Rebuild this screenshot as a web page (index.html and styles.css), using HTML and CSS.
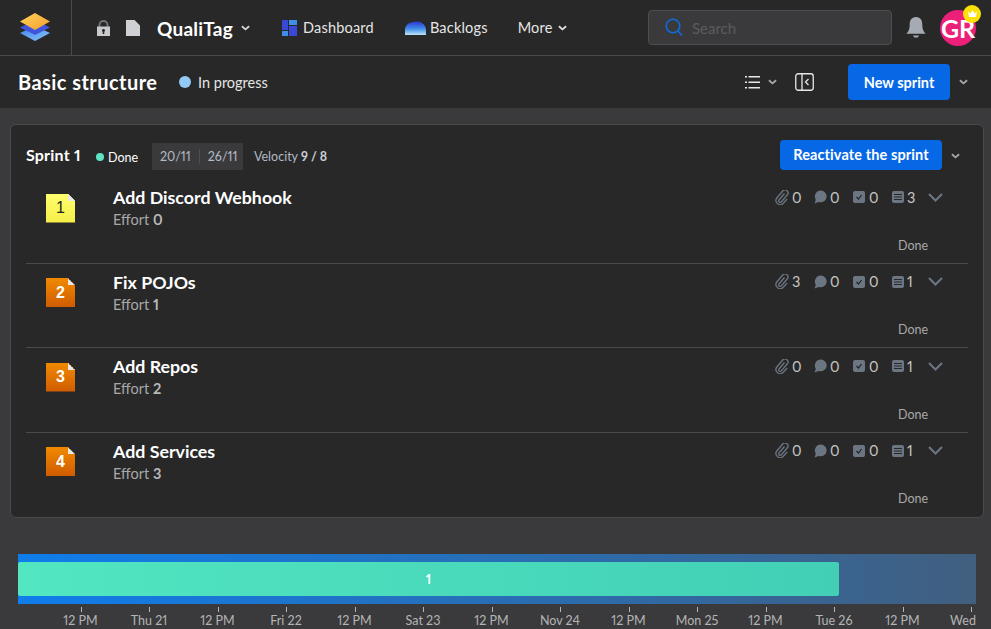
FILE: index.html
```html
<!DOCTYPE html>
<html lang="en">
<head>
<meta charset="utf-8">
<title>QualiTag</title>
<link rel="stylesheet" href="styles.css">
</head>
<body>
<header class="topbar">
  <div class="logo-cell">
    <svg width="32" height="30" viewBox="0 0 32 30"><defs><linearGradient id="lg1" x1="0" y1="0" x2="1" y2="1"><stop offset="0" stop-color="#ffd65a"/><stop offset="1" stop-color="#f79a2e"/></linearGradient><linearGradient id="lg2" x1="0" y1="0" x2="1" y2="1"><stop offset="0" stop-color="#3d82ec"/><stop offset="1" stop-color="#86c5f7"/></linearGradient></defs><path d="M16 14 31 21 16 29 1 21Z" fill="url(#lg2)"/><path d="M16 8 31 15.500 16 23 1 15.500Z" fill="#3f55dc"/><path d="M16 1 31 9.500 16 18 1 9.500Z" fill="url(#lg1)"/></svg>
  </div>
  <div class="crumbs">
    <svg class="lock" width="15" height="16" viewBox="0 0 15 16"><path d="M3.500 7V5a4 4 0 0 1 8 0v2" fill="none" stroke="#6f7378" stroke-width="2"/><path fill-rule="evenodd" d="M1 6.500h13V16H1ZM7.500 9a1.500 1.500 0 0 0-.8 2.800V14h1.600v-2.200A1.500 1.500 0 0 0 7.500 9Z" fill="#c9cacc"/></svg>
    <svg class="doc" width="15" height="16" viewBox="0 0 15 16"><path d="M1 0h8.500L15 5.500V16H1Z" fill="#cfd0d3"/></svg>
    <span class="project">QualiTag</span>
    <svg class="chev" width="9" height="6" viewBox="0 0 10 6"><path d="M1 1l4 3.500L9 1" fill="none" stroke="#d5d5d5" stroke-width="1.600"/></svg>
    <a class="nav nav-dash">
      <svg width="15" height="16" viewBox="0 0 15 16"><rect width="6" height="10" fill="#3a48d8"/><rect y="11" width="6" height="5" fill="#3f8fe8"/><rect x="7" width="8" height="5" fill="#3f8fe8"/><rect x="7" y="6" width="8" height="10" fill="#3a48d8"/></svg>
      Dashboard
    </a>
    <a class="nav nav-back">
      <svg width="21" height="14" viewBox="0 0 21 14"><defs><linearGradient id="bk" x1="0" y1="0" x2="0" y2="1"><stop offset="0" stop-color="#2d35d0"/><stop offset=".55" stop-color="#3f8fe8"/><stop offset="1" stop-color="#bfe3f8"/></linearGradient></defs><path d="M0 14V9C0 5 3 2 6 1.500 10 0 15 0 17 2c2.500 1.500 4 4 4 7v5Z" fill="url(#bk)"/></svg>
      Backlogs
    </a>
    <a class="nav nav-more">More
      <svg class="chev" width="9" height="6" viewBox="0 0 10 6"><path d="M1 1l4 3.500L9 1" fill="none" stroke="#e0e0e0" stroke-width="1.700"/></svg>
    </a>
  </div>
  <div class="top-right">
    <div class="search">
      <svg width="18" height="19" viewBox="0 0 18 19"><circle cx="8" cy="8" r="6.800" fill="none" stroke="#0f6be0" stroke-width="1.600"/><path d="M13 13l4 4.500" stroke="#0f6be0" stroke-width="1.600"/></svg>
      <span>Search</span>
    </div>
    <svg class="bell" width="20" height="21" viewBox="0 0 19 20"><path d="M9.500 0C14 0 15.500 3.500 15.500 7.500c0 4 1 6 3.200 8.500H.3C2.500 13.500 3.500 11.500 3.500 7.500 3.500 3.500 5 0 9.500 0Z" fill="#a6abb3"/><path d="M6.500 17.500h6l-1.500 2H8Z" fill="#a6abb3"/></svg>
    <div class="avatar">GR
      <span class="crown"><svg width="11" height="9" viewBox="0 0 11 9"><path d="M1 2.500 3.500 4.500 5.500 1 7.500 4.500 10 2.500 9 8H2Z" fill="#fff"/></svg></span>
    </div>
  </div>
</header>

<section class="subbar">
  <h1>Basic structure</h1>
  <span class="dot dot-progress"></span>
  <span class="status">In progress</span>
  <div class="sub-right">
    <svg width="15" height="13" viewBox="0 0 15 13"><g fill="#e8e8e8"><rect width="2" height="1.500"/><rect x="3.500" width="11.500" height="1.500"/><rect y="5.500" width="2" height="1.500"/><rect x="3.500" y="5.500" width="11.500" height="1.500"/><rect y="11" width="2" height="1.500"/><rect x="3.500" y="11" width="11.500" height="1.500"/></g></svg>
    <svg class="chev sub-chev" width="9" height="6" viewBox="0 0 10 6"><path d="M1 1l4 3.500L9 1" fill="none" stroke="#a8a8a8" stroke-width="1.700"/></svg>
    <svg class="panel" width="19" height="18" viewBox="0 0 19 18"><rect x=".75" y=".75" width="17.500" height="16.500" rx="2.500" fill="none" stroke="#e8e8e8" stroke-width="1.300"/><path d="M7 1v16" stroke="#e8e8e8" stroke-width="1.300"/><path d="M13.500 6l-3 3 3 3" fill="none" stroke="#e8e8e8" stroke-width="1.300"/></svg>
    <button class="btn btn-new">New sprint</button>
    <svg class="chev sub-chev2" width="9" height="6" viewBox="0 0 10 6"><path d="M1 1l4 3.500L9 1" fill="none" stroke="#a8a8a8" stroke-width="1.700"/></svg>
  </div>
</section>

<main class="content">
  <section class="card">
    <div class="sprint-head">
      <span class="sprint-name">Sprint 1</span>
      <span class="dot dot-done"></span>
      <span class="done-label">Done</span>
      <span class="dates"><span>20/11</span><i></i><span>26/11</span></span>
      <span class="velocity">Velocity <b>9 / 8</b></span>
      <button class="btn btn-react">Reactivate the sprint</button>
      <svg class="chev react-chev" width="9" height="6" viewBox="0 0 10 6"><path d="M1 1l4 3.500L9 1" fill="none" stroke="#a8a8a8" stroke-width="1.700"/></svg>
    </div>

    <article class="row">
      <div class="note note-yellow">1</div>
      <div class="info"><h2>Add Discord Webhook</h2><p>Effort <b>0</b></p></div>
      <div class="meta">
        <div class="counts">
          <svg width="14" height="15" viewBox="0 0 14 15"><path d="M9.500 3.500 4 10a1.500 1.500 0 0 0 2.200 2l6-7a3 3 0 0 0-4.500-4L1.800 8a4.200 4.200 0 0 0 6.300 5.500l4-4.500" fill="none" stroke="#6c7683" stroke-width="1.300"/></svg><span>0</span>
          <svg class="c2" width="13" height="14" viewBox=".5 .8 12.200 12.400"><path d="M6.800 1a5.500 5.500 0 1 1-2 10.600L1 13l1.200-3.500A5.500 5.500 0 0 1 6.800 1Z" fill="#6c7683"/></svg><span>0</span>
          <svg class="c3" width="12" height="12" viewBox="0 0 12 12"><rect width="12" height="12" rx="2" fill="#6c7683"/><path d="M3.500 6l2 2 3-4" fill="none" stroke="#1f2226" stroke-width="1.200"/></svg><span>0</span>
          <svg class="c4" width="12" height="12" viewBox="0 0 12 12"><rect width="12" height="12" rx="2" fill="#6c7683"/><path d="M2 3.500h8M2 6h8M2 8.500h8" stroke="#282828" stroke-width="1"/></svg><span>3</span>
          <svg class="expand" width="15" height="9" viewBox="0 0 15 9"><path d="M1 1l6.500 6.500L14 1" fill="none" stroke="#6c7683" stroke-width="2"/></svg>
        </div>
        <div class="row-status">Done</div>
      </div>
    </article>

    <article class="row">
      <div class="note note-orange">2</div>
      <div class="info"><h2>Fix POJOs</h2><p>Effort <b>1</b></p></div>
      <div class="meta">
        <div class="counts">
          <svg width="14" height="15" viewBox="0 0 14 15"><path d="M9.500 3.500 4 10a1.500 1.500 0 0 0 2.200 2l6-7a3 3 0 0 0-4.500-4L1.800 8a4.200 4.200 0 0 0 6.300 5.500l4-4.500" fill="none" stroke="#6c7683" stroke-width="1.300"/></svg><span>3</span>
          <svg class="c2" width="13" height="14" viewBox=".5 .8 12.200 12.400"><path d="M6.800 1a5.500 5.500 0 1 1-2 10.600L1 13l1.200-3.500A5.500 5.500 0 0 1 6.800 1Z" fill="#6c7683"/></svg><span>0</span>
          <svg class="c3" width="12" height="12" viewBox="0 0 12 12"><rect width="12" height="12" rx="2" fill="#6c7683"/><path d="M3.500 6l2 2 3-4" fill="none" stroke="#1f2226" stroke-width="1.200"/></svg><span>0</span>
          <svg class="c4" width="12" height="12" viewBox="0 0 12 12"><rect width="12" height="12" rx="2" fill="#6c7683"/><path d="M2 3.500h8M2 6h8M2 8.500h8" stroke="#282828" stroke-width="1"/></svg><span>1</span>
          <svg class="expand" width="15" height="9" viewBox="0 0 15 9"><path d="M1 1l6.500 6.500L14 1" fill="none" stroke="#6c7683" stroke-width="2"/></svg>
        </div>
        <div class="row-status">Done</div>
      </div>
    </article>

    <article class="row">
      <div class="note note-orange">3</div>
      <div class="info"><h2>Add Repos</h2><p>Effort <b>2</b></p></div>
      <div class="meta">
        <div class="counts">
          <svg width="14" height="15" viewBox="0 0 14 15"><path d="M9.500 3.500 4 10a1.500 1.500 0 0 0 2.200 2l6-7a3 3 0 0 0-4.500-4L1.800 8a4.200 4.200 0 0 0 6.300 5.500l4-4.500" fill="none" stroke="#6c7683" stroke-width="1.300"/></svg><span>0</span>
          <svg class="c2" width="13" height="14" viewBox=".5 .8 12.200 12.400"><path d="M6.800 1a5.500 5.500 0 1 1-2 10.600L1 13l1.200-3.500A5.500 5.500 0 0 1 6.800 1Z" fill="#6c7683"/></svg><span>0</span>
          <svg class="c3" width="12" height="12" viewBox="0 0 12 12"><rect width="12" height="12" rx="2" fill="#6c7683"/><path d="M3.500 6l2 2 3-4" fill="none" stroke="#1f2226" stroke-width="1.200"/></svg><span>0</span>
          <svg class="c4" width="12" height="12" viewBox="0 0 12 12"><rect width="12" height="12" rx="2" fill="#6c7683"/><path d="M2 3.500h8M2 6h8M2 8.500h8" stroke="#282828" stroke-width="1"/></svg><span>1</span>
          <svg class="expand" width="15" height="9" viewBox="0 0 15 9"><path d="M1 1l6.500 6.500L14 1" fill="none" stroke="#6c7683" stroke-width="2"/></svg>
        </div>
        <div class="row-status">Done</div>
      </div>
    </article>

    <article class="row">
      <div class="note note-orange">4</div>
      <div class="info"><h2>Add Services</h2><p>Effort <b>3</b></p></div>
      <div class="meta">
        <div class="counts">
          <svg width="14" height="15" viewBox="0 0 14 15"><path d="M9.500 3.500 4 10a1.500 1.500 0 0 0 2.200 2l6-7a3 3 0 0 0-4.500-4L1.800 8a4.200 4.200 0 0 0 6.300 5.500l4-4.500" fill="none" stroke="#6c7683" stroke-width="1.300"/></svg><span>0</span>
          <svg class="c2" width="13" height="14" viewBox=".5 .8 12.200 12.400"><path d="M6.800 1a5.500 5.500 0 1 1-2 10.600L1 13l1.200-3.500A5.500 5.500 0 0 1 6.800 1Z" fill="#6c7683"/></svg><span>0</span>
          <svg class="c3" width="12" height="12" viewBox="0 0 12 12"><rect width="12" height="12" rx="2" fill="#6c7683"/><path d="M3.500 6l2 2 3-4" fill="none" stroke="#1f2226" stroke-width="1.200"/></svg><span>0</span>
          <svg class="c4" width="12" height="12" viewBox="0 0 12 12"><rect width="12" height="12" rx="2" fill="#6c7683"/><path d="M2 3.500h8M2 6h8M2 8.500h8" stroke="#282828" stroke-width="1"/></svg><span>1</span>
          <svg class="expand" width="15" height="9" viewBox="0 0 15 9"><path d="M1 1l6.500 6.500L14 1" fill="none" stroke="#6c7683" stroke-width="2"/></svg>
        </div>
        <div class="row-status">Done</div>
      </div>
    </article>
  </section>

  <section class="chart">
    <div class="track"><div class="bar">1</div></div>
    <div class="axis">
      <div class="tick">12 PM</div><div class="tick">Thu 21</div><div class="tick">12 PM</div><div class="tick">Fri 22</div><div class="tick">12 PM</div><div class="tick">Sat 23</div><div class="tick">12 PM</div><div class="tick">Nov 24</div><div class="tick">12 PM</div><div class="tick">Mon 25</div><div class="tick">12 PM</div><div class="tick">Tue 26</div><div class="tick">12 PM</div><div class="tick">Wed</div>
    </div>
  </section>
</main>
</body>
</html>
```

FILE: styles.css
```css
* { box-sizing: border-box; }
html, body { margin: 0; padding: 0; }
body {
  width: 991px;
  height: 629px;
  overflow: hidden;
  background: #3a3a3c;
  color: #fff;
  font-family: "Lato", "Liberation Sans", sans-serif;
  font-variant-numeric: proportional-nums;
}
svg { display: block; flex: none; }
h1, h2, p { margin: 0; }
.chev path { stroke-width: 2; }

.topbar {
  height: 56px;
  display: flex;
  align-items: center;
  background: #282828;
  border-bottom: 1px solid #4a4a4a;
}
.logo-cell {
  width: 72px;
  height: 55px;
  padding: 12px 0 0 19px;
  border-right: 1px solid #4a4a4a;
}
.crumbs { display: flex; align-items: center; padding-left: 24px; }
.doc { margin-left: 14px; }
.project {
  margin: 2px 0 0 17px;
  width: 77px;
  font-size: 19px;
  line-height: 24px;
  font-weight: 700;
  letter-spacing: .25px;
  white-space: nowrap;
}
.crumbs > .chev { margin-left: 7px; }
.nav { display: flex; align-items: center; font-size: 14.500px; letter-spacing: .2px; color: #e6e6e6; white-space: nowrap; }
.nav-dash { margin-left: 32px; gap: 6px; }
.nav-back { margin-left: 31px; gap: 4px; }
.nav-more { margin-left: 30px; gap: 5px; }

.top-right { margin-left: auto; display: flex; align-items: center; padding-right: 15px; }
.search {
  width: 244px;
  height: 35px;
  display: flex;
  align-items: center;
  gap: 9px;
  padding-left: 16px;
  background: #3a3a3c;
  border: 1px solid #4e4e50;
  border-radius: 4px;
  font-size: 15px;
  color: #5c5c5e;
}
.bell { margin-left: 14px; }
.avatar {
  position: relative;
  margin-left: 14px;
  width: 36px;
  height: 36px;
  border-radius: 50%;
  background: #ec1f79;
  display: flex;
  align-items: center;
  justify-content: center;
  font-size: 25px;
  font-weight: 700;
}
.crown {
  position: absolute;
  top: -5px;
  right: -5px;
  width: 18px;
  height: 18px;
  border-radius: 50%;
  background: #fbe108;
  display: flex;
  align-items: center;
  justify-content: center;
}

.subbar {
  height: 52px;
  display: flex;
  align-items: center;
  padding: 0 23px 0 18px;
  background: #282828;
}
h1 { font-size: 20px; font-weight: 700; letter-spacing: .45px; width: 139px; white-space: nowrap; }
.dot { display: block; border-radius: 50%; flex: none; }
.dot-progress { width: 12px; height: 12px; margin-left: 22px; background: #93c9f5; }
.status { margin-left: 7px; font-size: 14.500px; color: #e6e6e6; }
.sub-right { margin-left: auto; display: flex; align-items: center; }
.sub-chev { margin-left: 8px; }
.panel { margin-left: 18px; }
.btn {
  border: 0;
  color: #fff;
  background: #0768e6;
  border-radius: 4px;
  font-family: inherit;
  font-weight: 700;
  padding: 0;
}
.btn-new { margin-left: 34px; width: 102px; height: 36px; font-size: 14.500px; }
.sub-chev2 { margin-left: 9px; }

.content { padding: 16px 7px 0 10px; }
.card {
  height: 394px;
  padding: 0 15px;
  background: #282828;
  border: 1px solid #4a4a4a;
  border-radius: 6px;
}
.sprint-head { height: 54px; padding-top: 9px; display: flex; align-items: center; }
.sprint-name { margin-bottom: 4px; font-size: 16px; font-weight: 700; letter-spacing: .2px; width: 70px; white-space: nowrap; }
.dot-done { width: 8px; height: 8px; background: #5fe3c3; }
.done-label { margin: 2px 0 0 4px; font-size: 12.500px; width: 44px; }
.dates {
  display: flex;
  align-items: center;
  width: 91px;
  height: 27px;
  padding-left: 8px;
  background: #3a3a3c;
  font-size: 12.500px;
  color: #b5bcc5;
}
.dates i { width: 1px; height: 15px; margin: 0 8px; background: #4e4e50; }
.velocity { margin-left: 11px; font-size: 12.500px; color: #aeb9c6; }
.velocity b { font-weight: 700; color: #c8ced6; }
.btn-react { margin: 0 0 4px auto; width: 162px; height: 30px; font-size: 14.500px; letter-spacing: .1px; }
.react-chev { margin: 0 8px 2px 9px; }

.row {
  height: 84.500px;
  display: flex;
  width: 942px;
  border-bottom: 1px solid #4a4a4a;
}
.row:last-child { border-bottom: 0; }
.note {
  position: relative;
  width: 29px;
  height: 29px;
  margin: 14.500px 0 0 20px;
  font-family: "Liberation Sans", sans-serif;
  font-size: 16px;
  display: flex;
  align-items: center;
  justify-content: center;
  clip-path: polygon(0 0, 75% 0, 100% 25%, 100% 100%, 0 100%);
}
.note::after {
  content: "";
  position: absolute;
  top: 0;
  right: 0;
  width: 7px;
  height: 7px;
  background: linear-gradient(45deg, #e8e8e8 50%, transparent 50%);
}
.note-yellow { color: #222; background: linear-gradient(#ffff6e, #f5ee48); }
.note-orange { color: #fff; background: linear-gradient(#f08a00, #d05c00); font-weight: 700; }
.info { margin: 4px 0 0 38px; }
h2 { font-size: 17.800px; font-weight: 700; line-height: 28px; white-space: nowrap; }
.info p { font-size: 14.500px; line-height: 17px; color: #a9a9a9; }
.info b { font-weight: 700; color: #b8b8b8; }
.meta { margin-left: auto; width: 193px; padding-top: 8px; }
.counts { display: flex; align-items: center; height: 20px; font-size: 14.500px; color: #c4c4c4; }
.counts span { margin-left: 3px; width: 10px; }
.c2 { margin-left: 12px; }
.c3 { margin-left: 13px; }
.c3 + span { margin-left: 4px; }
.c4 { margin-left: 13px; }
.expand { margin-left: 11px; }
.row-status { margin-top: 30.500px; padding-left: 123px; font-size: 12.500px; color: #a9a9a9; }

.chart { margin: 36px 8px 0 8px; }
.track {
  width: 958px;
  height: 50px;
  padding-top: 8px;
  background: linear-gradient(90deg, #0f7deb, #415f7f);
}
.bar {
  width: 821px;
  height: 34px;
  border-radius: 2px;
  background: linear-gradient(90deg, #52e6c1, #42cfb6);
  display: flex;
  align-items: center;
  justify-content: center;
  font-size: 13px;
  font-weight: 700;
}
.axis {
  display: flex;
  width: 1000px;
  padding-left: 28.250px;
  font-size: 12.500px;
  color: #b4b4b4;
}
.tick {
  width: 68.500px;
  flex: none;
  text-align: center;
  padding-top: 9px;
  position: relative;
  line-height: 15px;
  white-space: nowrap;
}
.tick:last-child { text-indent: -16px; }
.tick::before {
  content: "";
  position: absolute;
  top: 3px;
  left: 50%;
  width: 1px;
  height: 5px;
  background: #b4b4b4;
}
```
